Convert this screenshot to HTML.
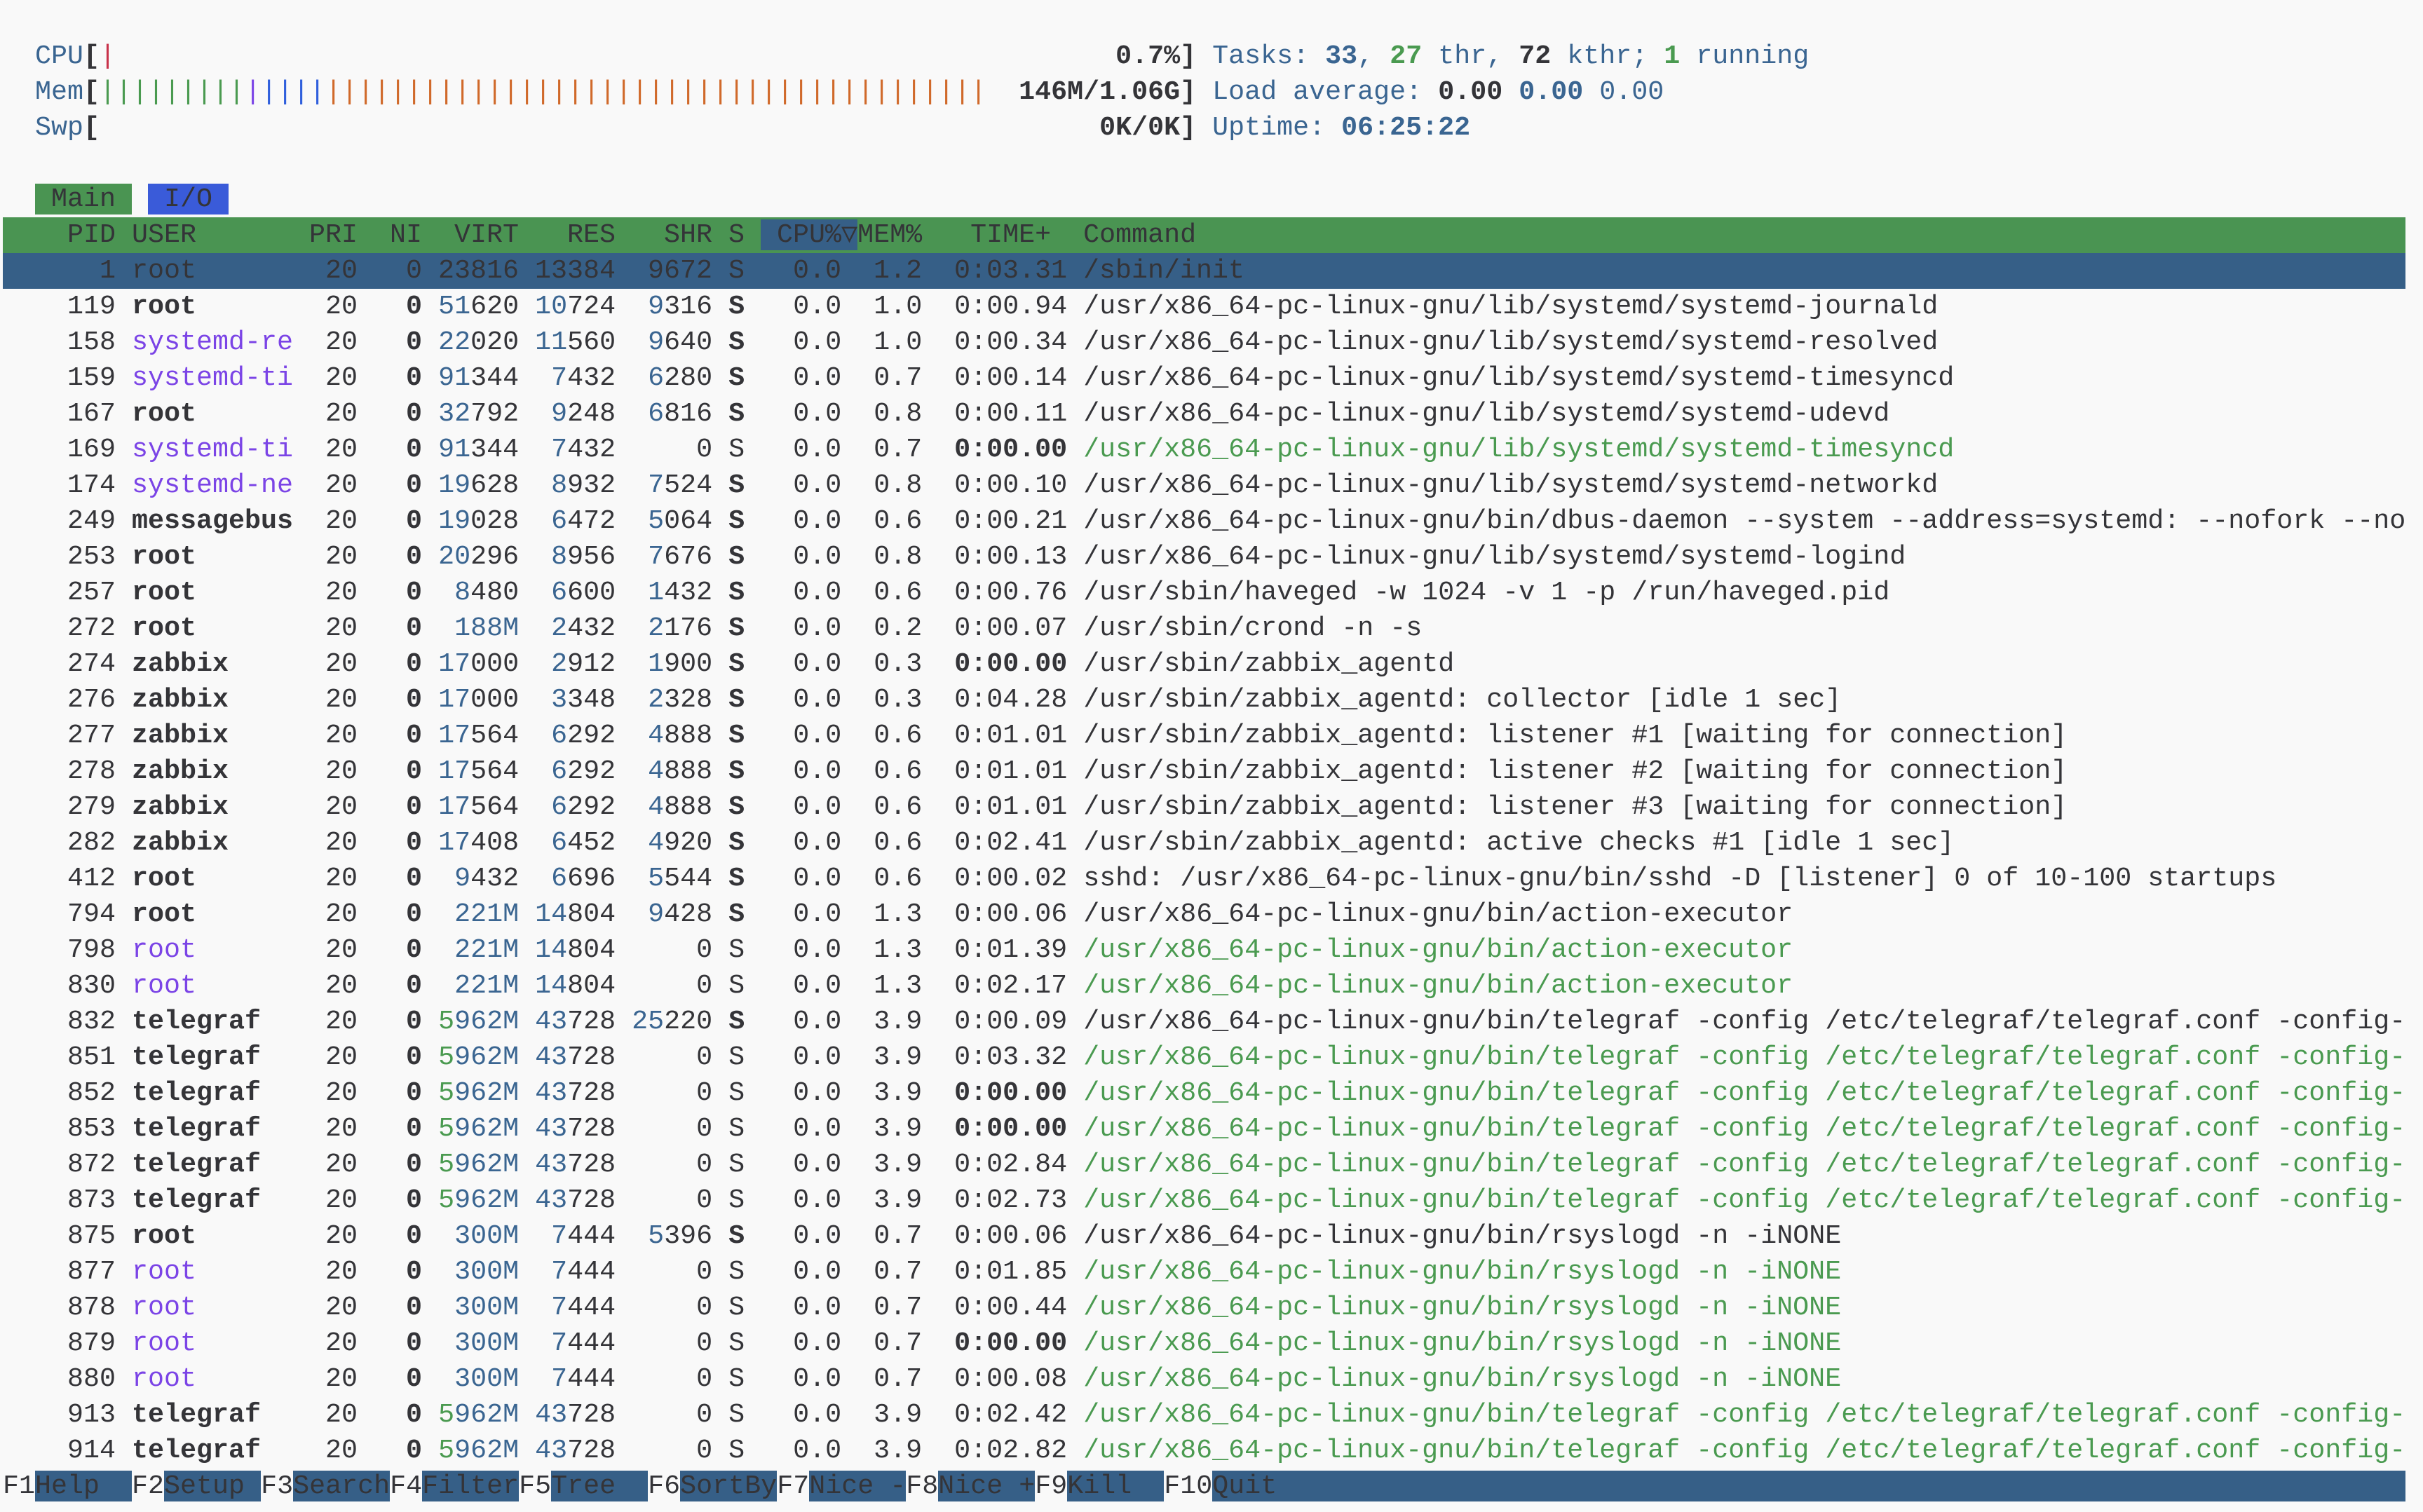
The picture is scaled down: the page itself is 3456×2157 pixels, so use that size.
<!DOCTYPE html>
<html><head><meta charset="utf-8">
<style>
html,body{margin:0;padding:0;background:#f9f9f9;width:3456px;height:2157px;overflow:hidden}
#t{position:absolute;left:4px;top:4px;width:3427px;font-family:"Liberation Mono","DejaVu Sans Mono",monospace;font-size:38.333px;color:#343438}
.l{position:absolute;left:0;width:3427px;height:51px;line-height:51px;white-space:pre;overflow:hidden}
.b{color:#3a6591}.g{color:#4a9a50}.p{color:#7b44e6}.o{color:#d0692a}.r{color:#c8324a}.bl{color:#2f5fdc}
.B{font-weight:bold}
.hdr{background:#4a9452}
.sel{background:#365f87}
.fk{background:#365f87}
</style></head><body>
<div id="t"></div>
<script>
const H=51.0;
let out='';
function line(i,html,cls){out+=`<div class="l ${cls||''}" style="top:${(i*H).toFixed(2)}px">${html}</div>`;}
function pad(s,n){s=String(s);return s.length>=n?s:' '.repeat(n-s.length)+s;}
function padr(s,n){s=String(s);return s.length>=n?s:s+' '.repeat(n-s.length);}
line(1,`  <span class="b">CPU</span><span class="B">[</span><span class="r">|</span>${' '.repeat(62)}<span class="B">0.7%]</span> <span class="b">Tasks: </span><span class="b B">33</span><span class="b">, </span><span class="g B">27</span><span class="b"> thr, </span><span class="B">72</span><span class="b"> kthr; </span><span class="g B">1</span><span class="b"> running</span>`);
let bars='<span class="g">'+'|'.repeat(9)+'</span><span class="p">|</span><span class="bl">||||</span><span class="o">'+'|'.repeat(41)+'</span>';
line(2,`  <span class="b">Mem</span><span class="B">[</span>${bars}  <span class="B">146M/1.06G]</span> <span class="b">Load average: </span><span class="B">0.00 </span><span class="b B">0.00 </span><span class="b">0.00</span>`);
line(3,`  <span class="b">Swp</span><span class="B">[</span>${' '.repeat(62)}<span class="B">0K/0K]</span> <span class="b">Uptime: </span><span class="b B">06:25:22</span>`);
line(5,`  <span style="background:#4a9452"> Main </span> <span style="background:#3a5bd9"> I/O </span>`);
line(6,`    PID USER       PRI  NI  VIRT   RES   SHR S <span class="sel"> CPU%▽</span>MEM%   TIME+  Command${' '.repeat(90)}`,'hdr');
const L='/usr/x86_64-pc-linux-gnu/';
const TG=L+'bin/telegraf -config /etc/telegraf/telegraf.conf -config-directory /etc/telegraf/telegraf.d';
const RS=L+'bin/rsyslogd -n -iNONE';
const AE=L+'bin/action-executor';
const R=[
[1,'root',0,'23816','13384','9672','1.2','0:03.31','/sbin/init',0],
[119,'root',0,'51620','10724','9316','1.0','0:00.94',L+'lib/systemd/systemd-journald',0],
[158,'systemd-re',1,'22020','11560','9640','1.0','0:00.34',L+'lib/systemd/systemd-resolved',0],
[159,'systemd-ti',1,'91344','7432','6280','0.7','0:00.14',L+'lib/systemd/systemd-timesyncd',0],
[167,'root',0,'32792','9248','6816','0.8','0:00.11',L+'lib/systemd/systemd-udevd',0],
[169,'systemd-ti',1,'91344','7432','0','0.7','0:00.00',L+'lib/systemd/systemd-timesyncd',1],
[174,'systemd-ne',1,'19628','8932','7524','0.8','0:00.10',L+'lib/systemd/systemd-networkd',0],
[249,'messagebus',0,'19028','6472','5064','0.6','0:00.21',L+'bin/dbus-daemon --system --address=systemd: --nofork --nopidfile',0],
[253,'root',0,'20296','8956','7676','0.8','0:00.13',L+'lib/systemd/systemd-logind',0],
[257,'root',0,'8480','6600','1432','0.6','0:00.76','/usr/sbin/haveged -w 1024 -v 1 -p /run/haveged.pid',0],
[272,'root',0,'188M','2432','2176','0.2','0:00.07','/usr/sbin/crond -n -s',0],
[274,'zabbix',0,'17000','2912','1900','0.3','0:00.00','/usr/sbin/zabbix_agentd',0],
[276,'zabbix',0,'17000','3348','2328','0.3','0:04.28','/usr/sbin/zabbix_agentd: collector [idle 1 sec]',0],
[277,'zabbix',0,'17564','6292','4888','0.6','0:01.01','/usr/sbin/zabbix_agentd: listener #1 [waiting for connection]',0],
[278,'zabbix',0,'17564','6292','4888','0.6','0:01.01','/usr/sbin/zabbix_agentd: listener #2 [waiting for connection]',0],
[279,'zabbix',0,'17564','6292','4888','0.6','0:01.01','/usr/sbin/zabbix_agentd: listener #3 [waiting for connection]',0],
[282,'zabbix',0,'17408','6452','4920','0.6','0:02.41','/usr/sbin/zabbix_agentd: active checks #1 [idle 1 sec]',0],
[412,'root',0,'9432','6696','5544','0.6','0:00.02','sshd: /usr/x86_64-pc-linux-gnu/bin/sshd -D [listener] 0 of 10-100 startups',0],
[794,'root',0,'221M','14804','9428','1.3','0:00.06',AE,0],
[798,'root',1,'221M','14804','0','1.3','0:01.39',AE,1],
[830,'root',1,'221M','14804','0','1.3','0:02.17',AE,1],
[832,'telegraf',0,'5962M','43728','25220','3.9','0:00.09',TG,0],
[851,'telegraf',0,'5962M','43728','0','3.9','0:03.32',TG,1],
[852,'telegraf',0,'5962M','43728','0','3.9','0:00.00',TG,1],
[853,'telegraf',0,'5962M','43728','0','3.9','0:00.00',TG,1],
[872,'telegraf',0,'5962M','43728','0','3.9','0:02.84',TG,1],
[873,'telegraf',0,'5962M','43728','0','3.9','0:02.73',TG,1],
[875,'root',0,'300M','7444','5396','0.7','0:00.06',RS,0],
[877,'root',1,'300M','7444','0','0.7','0:01.85',RS,1],
[878,'root',1,'300M','7444','0','0.7','0:00.44',RS,1],
[879,'root',1,'300M','7444','0','0.7','0:00.00',RS,1],
[880,'root',1,'300M','7444','0','0.7','0:00.08',RS,1],
[913,'telegraf',0,'5962M','43728','0','3.9','0:02.42',TG,1],
[914,'telegraf',0,'5962M','43728','0','3.9','0:02.82',TG,1]];
function num(v,w){
  const p=' '.repeat(Math.max(0,w-v.length));
  if(v.endsWith('M')){
    if(v.length>=5) return p+`<span class="g">${v.slice(0,v.length-4)}</span><span class="b">${v.slice(-4)}</span>`;
    return p+`<span class="b">${v}</span>`;
  }
  if(v.length>3) return p+`<span class="b">${v.slice(0,v.length-3)}</span>${v.slice(-3)}`;
  return p+v;
}
R.forEach((r,k)=>{
  const i=7+k;
  const [pid,u,uc,vi,re,sh,me,tm,cmd,th]=r;
  const cmdT=cmd.slice(0,82);
  if(k===0){
    line(i,`${pad(pid,7)} ${padr(u,10)} ${pad(20,3)} ${pad(0,3)} ${pad(vi,5)} ${pad(re,5)} ${pad(sh,5)} S ${pad('0.0',5)} ${pad(me,4)} ${pad(tm,8)} ${padr(cmdT,82)}`,'sel');
    return;
  }
  const us=uc?`<span class="p">${padr(u,10)}</span>`:`<span class="B">${padr(u,10)}</span>`;
  const tms=tm==='0:00.00'?`<span class="B">${tm}</span>`:tm;
  const cs=th?`<span class="g">${cmdT}</span>`:cmdT;
  const S=th?'S':'<span class="B">S</span>';
  line(i,`${pad(pid,7)} ${us} ${pad(20,3)}   <span class="B">0</span> ${num(vi,5)} ${num(re,5)} ${num(sh,5)} ${S}   0.0 ${pad(me,4)}  ${tms} ${cs}`);
});
const F=[['F1','Help  '],['F2','Setup '],['F3','Search'],['F4','Filter'],['F5','Tree  '],['F6','SortBy'],['F7','Nice -'],['F8','Nice +'],['F9','Kill  '],['F10','Quit'+' '.repeat(70)]];
line(41,F.map(f=>`${f[0]}<span class="fk">${f[1]}</span>`).join(''));
document.getElementById('t').innerHTML=out;
</script>
</body></html>
